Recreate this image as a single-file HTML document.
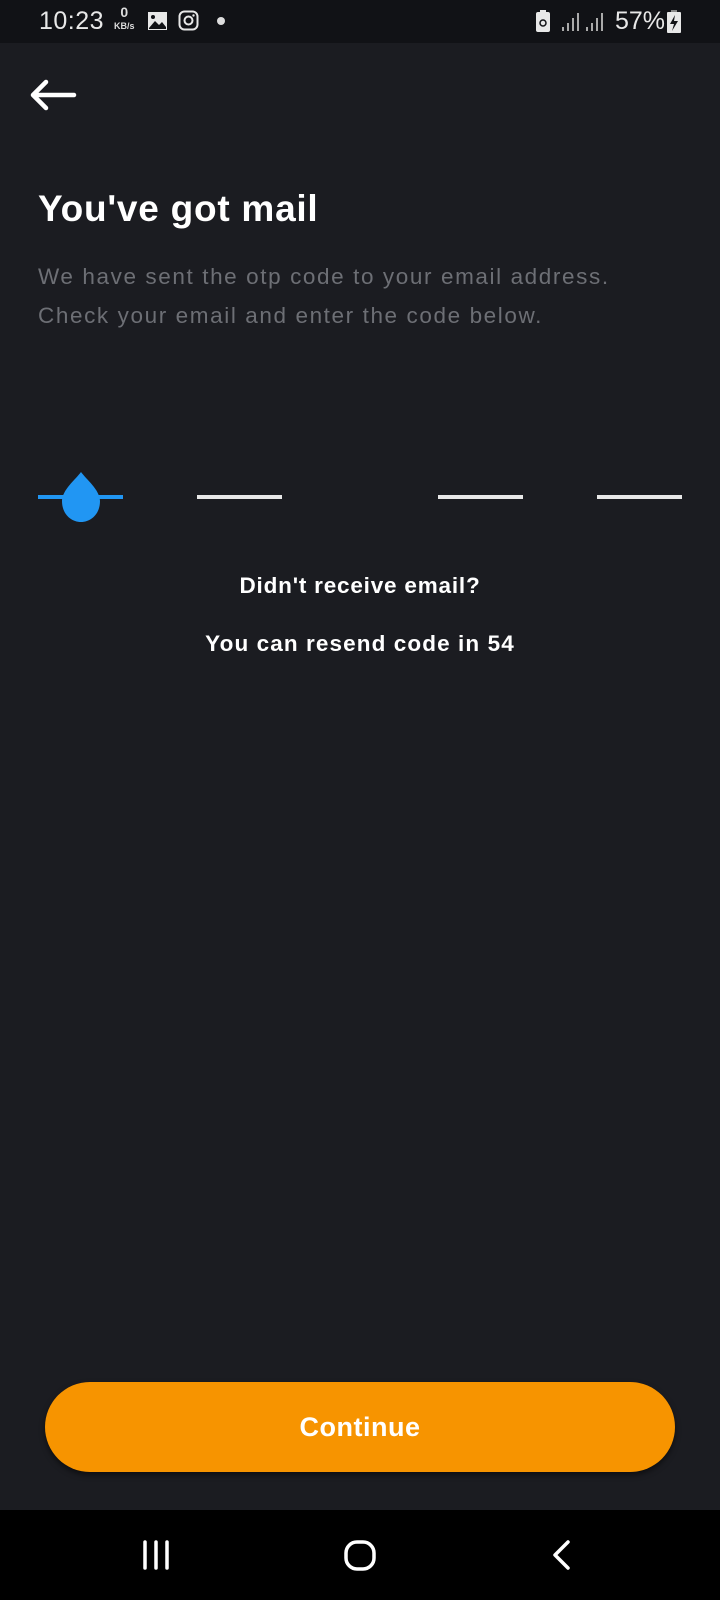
<!DOCTYPE html>
<html><head><meta charset="utf-8"><style>
html,body{margin:0;padding:0}
body{width:720px;height:1600px;background:#1b1c21;position:relative;overflow:hidden;font-family:"Liberation Sans",Roboto,sans-serif;color:#fff}
.sb{position:absolute;left:0;top:0;width:720px;height:43px;background:#111216}
.t{position:absolute}
.line{position:absolute;top:495px;height:4px;width:85px;background:#e8e8e8}
</style></head><body>
<div class="sb">
<div class="t" style="left:39px;top:7px;font-size:25px;color:#e8e8e8;letter-spacing:0.5px">10:23</div>
<div class="t" style="left:114px;top:6px;font-size:14px;color:#ddd;line-height:12px;text-align:center;font-weight:bold">0<br><span style="font-size:9px">KB/s</span></div>
<svg class="t" style="left:147px;top:11px" width="21" height="20" viewBox="0 0 21 20"><rect x="1" y="1" width="19" height="18" fill="#e8e8e8"/><path d="M2 17 L8 10 L12 14 L15 11 L19 16 V18 H2Z" fill="#111216"/><circle cx="6" cy="6" r="2" fill="#111216"/></svg>
<svg class="t" style="left:178px;top:10px" width="21" height="21" viewBox="0 0 21 21"><rect x="1.5" y="1.5" width="18" height="18" rx="5" fill="none" stroke="#e8e8e8" stroke-width="2"/><circle cx="10.5" cy="10.5" r="4" fill="none" stroke="#e8e8e8" stroke-width="2"/><circle cx="15.5" cy="5.5" r="1.2" fill="#e8e8e8"/></svg>
<div class="t" style="left:217px;top:17px;width:8px;height:8px;border-radius:50%;background:#ddd"></div>
<svg class="t" style="left:536px;top:10px" width="14" height="22" viewBox="0 0 14 22"><rect x="4" y="0" width="6" height="3" fill="#e8e8e8"/><rect x="0" y="2" width="14" height="20" rx="2" fill="#e8e8e8"/><circle cx="7" cy="13" r="3" fill="none" stroke="#111216" stroke-width="1.5"/></svg>
<svg class="t" style="left:561px;top:12px" width="48" height="20" viewBox="0 0 48 20"><g fill="#aaa"><rect x="1" y="15" width="2" height="4"/><rect x="6" y="11" width="2" height="8"/><rect x="11" y="6" width="2" height="13"/><rect x="16" y="1" width="2" height="18"/><rect x="25" y="15" width="2" height="4"/><rect x="30" y="11" width="2" height="8"/><rect x="35" y="6" width="2" height="13"/><rect x="40" y="1" width="2" height="18"/></g></svg>
<div class="t" style="left:615px;top:7px;font-size:25px;color:#e8e8e8">57%</div>
<svg class="t" style="left:666px;top:10px" width="16" height="24" viewBox="0 0 16 24"><rect x="5" y="0" width="6" height="3" fill="#888"/><rect x="1" y="2" width="14" height="21" rx="1" fill="#e8e8e8"/><path d="M9 5 L4 14 H8 L6 21 L12 11 H8 Z" fill="#111216"/></svg>
</div>
<svg class="t" style="left:28px;top:78px" width="50" height="34" viewBox="0 0 50 34"><path d="M46 17 H5 M18 4 L5 17 L18 30" fill="none" stroke="#fff" stroke-width="4.5" stroke-linecap="round" stroke-linejoin="round"/></svg>
<div class="t" style="left:38px;top:188px;font-size:37px;font-weight:bold;letter-spacing:0.75px">You've got mail</div>
<div class="t" style="left:38px;top:257px;font-size:22.5px;color:#6d6f75;line-height:39px;letter-spacing:1.6px;white-space:nowrap">We have sent the otp code to your email address.<br>Check your email and enter the code below.</div>
<div class="line" style="left:38px;background:#2196f3;height:4px"></div>
<svg class="t" style="left:58px;top:470px" width="46" height="54" viewBox="0 0 46 54"><path d="M23 2 C18 9 4 20 4 31 C4 44 13 52 23 52 C33 52 42 44 42 31 C42 20 28 9 23 2Z" fill="#2196f3"/></svg>
<div class="line" style="left:197px"></div>
<div class="line" style="left:438px"></div>
<div class="line" style="left:597px"></div>
<div class="t" style="left:0;width:720px;text-align:center;top:573px;font-size:22.5px;font-weight:bold;letter-spacing:0.8px">Didn't receive email?</div>
<div class="t" style="left:0;width:720px;text-align:center;top:631px;font-size:22.5px;font-weight:bold;letter-spacing:1.1px">You can resend code in 54</div>
<div class="t" style="left:45px;top:1382px;width:630px;height:90px;border-radius:45px;background:#f79400;box-shadow:0 3px 6px rgba(0,0,0,.5);text-align:center;line-height:90px;font-size:27px;font-weight:bold;letter-spacing:0.5px">Continue</div>
<div class="t" style="left:0;top:1510px;width:720px;height:90px;background:#000"></div>
<svg class="t" style="left:140px;top:1538px" width="440" height="36" viewBox="0 0 440 36"><g stroke="#fff" stroke-width="3.5" fill="none" stroke-linecap="round" stroke-linejoin="round"><path d="M5 4 V30 M16 4 V30 M27 4 V30"/><rect x="206" y="4" width="28" height="27" rx="11"/><path d="M428 4 L415 17 L428 30"/></g></svg>
</body></html>
